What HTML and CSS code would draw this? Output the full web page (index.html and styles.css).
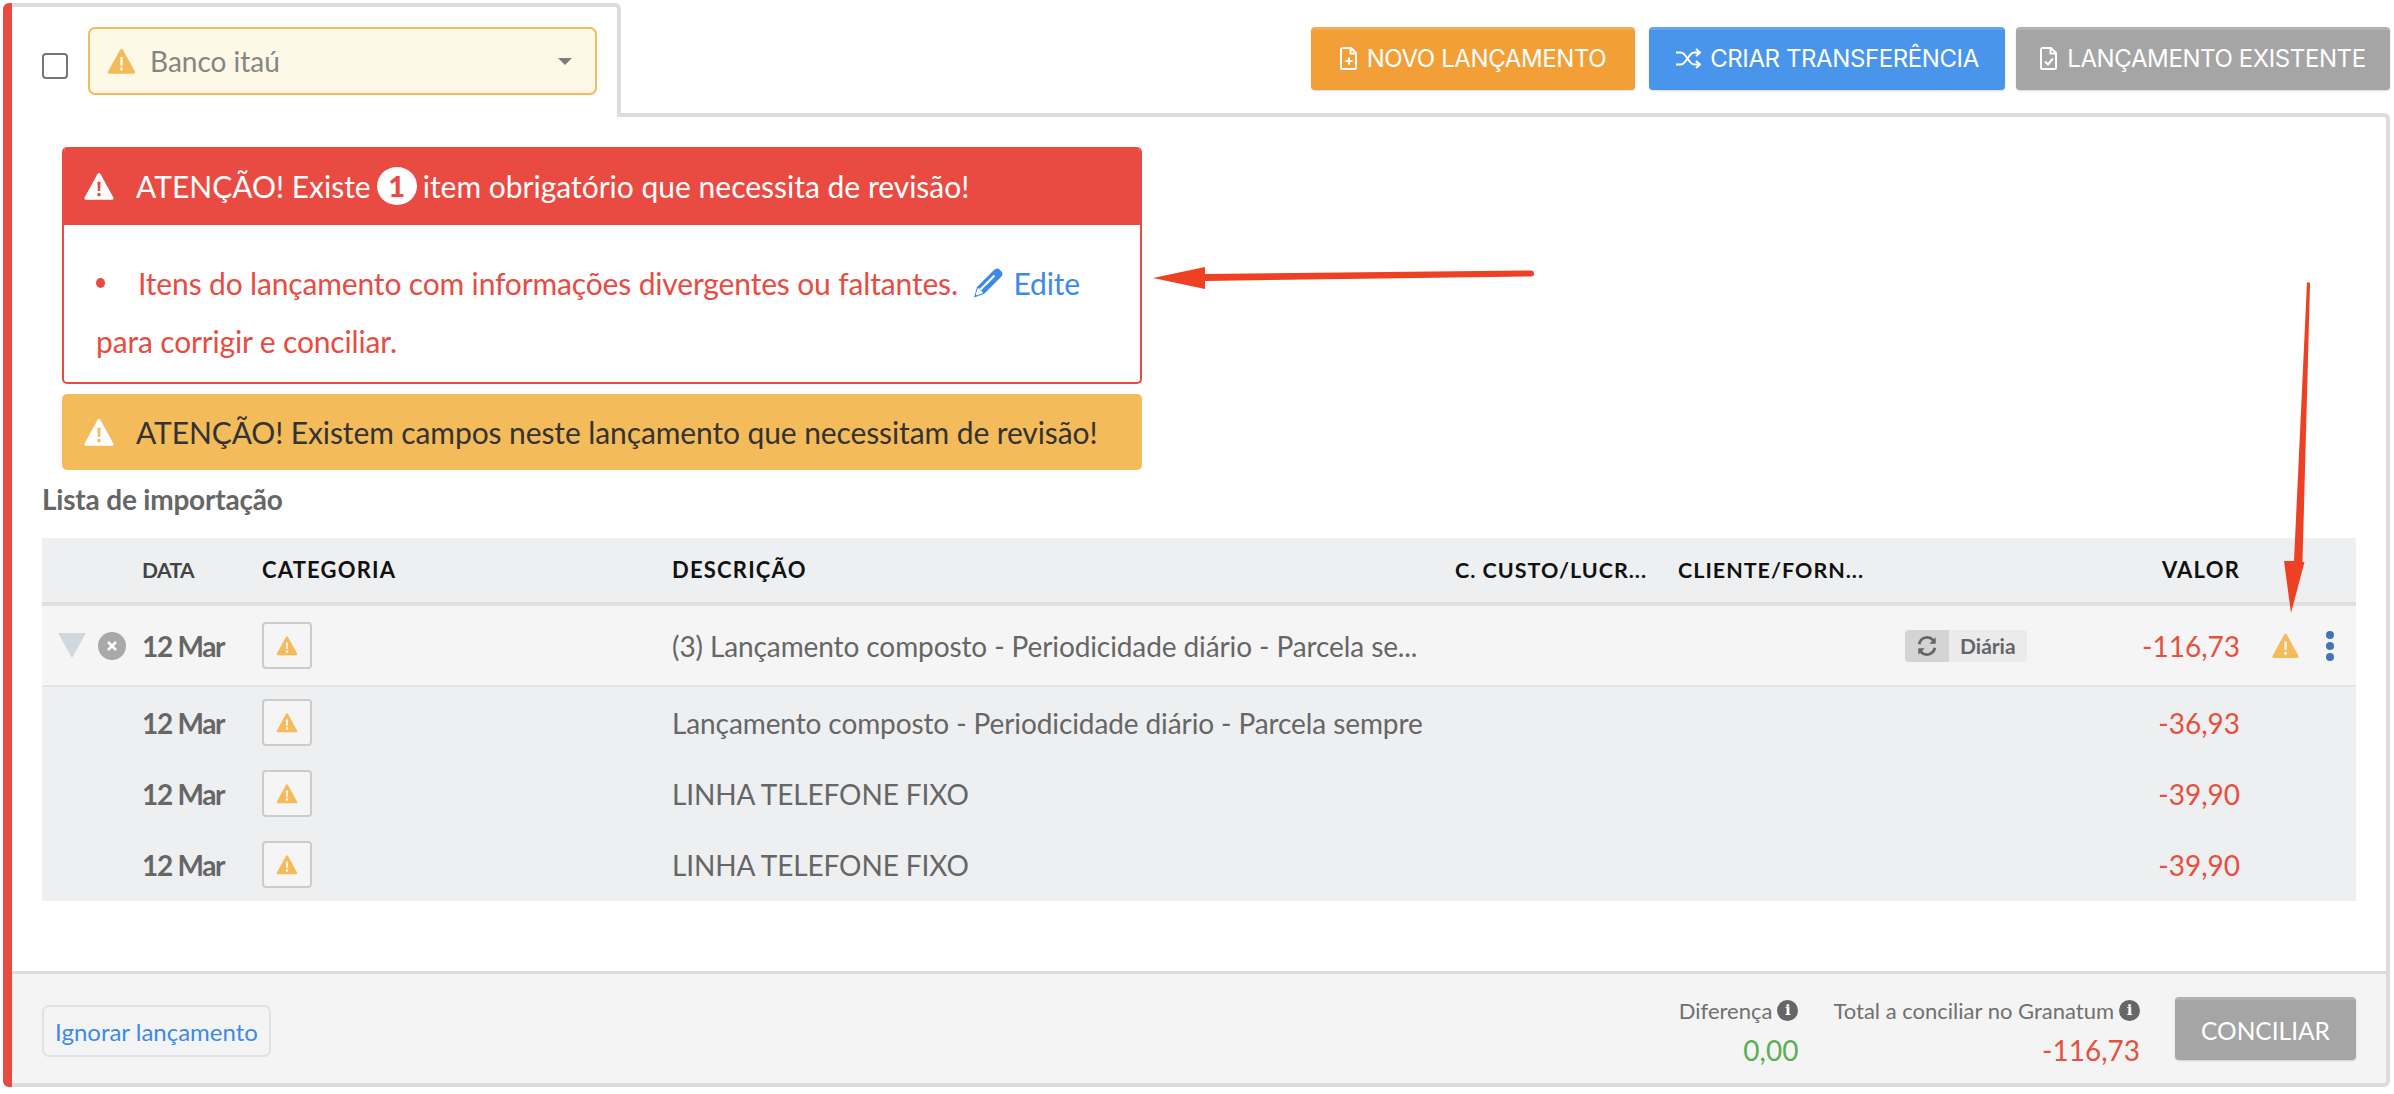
FILE: index.html
```html
<!DOCTYPE html>
<html lang="pt">
<head>
<meta charset="utf-8">
<title>Conciliação</title>
<link rel="stylesheet" href="styles.css">
</head>
<body>
<svg class="defs" width="0" height="0" aria-hidden="true">
  <symbol id="warn" viewBox="0 0 24 24"><path fill-rule="evenodd" d="M12 1.500c.5 0 .9.3 1.200.8l10.300 18.800c.5.9-.1 1.900-1.100 1.900H1.600c-1 0-1.600-1-1.100-1.900L10.800 2.300c.3-.5.7-.8 1.200-.8zM10.700 8.500l.4 7.500h1.800l.4-7.500zM10.800 17.500v2.700h2.400v-2.700z"/></symbol>
</svg>
<div class="card">
  <div class="top">
    <div class="tab">
      <span class="check"></span>
      <div class="select">
        <svg class="select-warn"><use href="#warn"/></svg>
        <span class="select-text">Banco itaú</span>
        <span class="caret"></span>
      </div>
    </div>
    <div class="actions">
      <button class="btn btn-orange">
        <svg class="btn-icon" viewBox="0 0 18 24"><path d="M2.500 1.500h8.500l5 5v14.500a1.500 1.500 0 0 1-1.500 1.500h-12a1.500 1.500 0 0 1-1.500-1.500v-18a1.500 1.500 0 0 1 1.500-1.500zM10.500 1.500v5.500h5.500M9 11v7M5.500 14.500h7"/></svg>
        NOVO LANÇAMENTO
      </button>
      <button class="btn btn-blue">
        <svg class="btn-icon btn-icon-wide" viewBox="0 0 26 24"><path d="M1 6h5c5 0 8 12 13 12h5M1 18h5c5 0 8-12 13-12h5M21 2.500l4 3.500-4 3.500M21 14.500l4 3.500-4 3.500"/></svg>
        CRIAR TRANSFERÊNCIA
      </button>
      <button class="btn btn-gray">
        <svg class="btn-icon" viewBox="0 0 18 24"><path d="M2.500 1.500h8.500l5 5v14.500a1.500 1.500 0 0 1-1.500 1.500h-12a1.500 1.500 0 0 1-1.500-1.500v-18a1.500 1.500 0 0 1 1.500-1.500zM10.500 1.500v5.500h5.500M5 15l3 3 5-6"/></svg>
        LANÇAMENTO EXISTENTE
      </button>
    </div>
  </div>

  <div class="content">
    <div class="alert-red">
      <div class="alert-red-head">
        <svg class="alert-icon"><use href="#warn"/></svg>
        <span>ATENÇÃO! Existe</span>
        <span class="count">1</span>
        <span>item obrigatório que necessita de revisão!</span>
      </div>
      <div class="alert-red-body">
        <span class="bullet"></span><span class="alert-item">Itens do lançamento com informações divergentes ou faltantes.</span>
        <a class="edit"><svg class="pencil" viewBox="0 0 30 30"><path class="pencil-body" d="M1 29.500L4 19 21 2c2-2 4.500-2 6 0l1 1c2 1.500 2 4 0 6L11 26z"/><path class="pencil-line" d="M7.500 21.500L21.500 7.500M3.800 26.200l1.600-5 3.400 3.400z"/></svg>Edite</a>
        <br>para corrigir e conciliar.
      </div>
    </div>
    <div class="alert-yellow">
      <svg class="alert-icon"><use href="#warn"/></svg>
      <span>ATENÇÃO! Existem campos neste lançamento que necessitam de revisão!</span>
    </div>
    <div class="list-title">Lista de importação</div>

    <div class="table">
      <div class="row row-head">
        <span class="cell-date-head">DATA</span>
        <span class="col-cat">CATEGORIA</span>
        <span class="col-desc">DESCRIÇÃO</span>
        <span class="col-cost">C. CUSTO/LUCR...</span>
        <span class="col-client">CLIENTE/FORN...</span>
        <span class="col-value">VALOR</span>
      </div>
      <div class="row row-main">
        <span class="col-tools">
          <span class="tri"></span>
          <svg class="xcircle" viewBox="0 0 28 28"><circle cx="14" cy="14" r="14"/><path d="M10 10l8 8M18 10l-8 8"/></svg>
        </span>
        <span class="col-date">12 Mar</span>
        <span class="col-cat"><span class="cat-box"><svg class="cat-warn"><use href="#warn"/></svg></span></span>
        <span class="col-desc-main">(3) Lançamento composto - Periodicidade diário - Parcela se...</span>
        <span class="col-tag"><span class="tag"><span class="tag-ico"><svg class="sync" viewBox="0 0 24 24"><path d="M3.500 10a8.700 8.700 0 0 1 15-4.500l2 2M20.500 14a8.700 8.700 0 0 1-15 4.500l-2-2"/><path class="sync-head" d="M21.500 2.500v7h-7zM2.500 21.500v-7h7z"/></svg></span><span class="tag-text">Diária</span></span></span>
        <span class="col-amount">-116,73</span>
        <span class="col-end">
          <svg class="row-warn"><use href="#warn"/></svg>
          <span class="dots"><i></i><i></i><i></i></span>
        </span>
      </div>
      <div class="row row-sub">
        <span class="col-date">12 Mar</span>
        <span class="col-cat"><span class="cat-box"><svg class="cat-warn"><use href="#warn"/></svg></span></span>
        <span class="col-desc-main">Lançamento composto - Periodicidade diário - Parcela sempre</span>
        <span class="col-amount">-36,93</span>
      </div>
      <div class="row row-sub">
        <span class="col-date">12 Mar</span>
        <span class="col-cat"><span class="cat-box"><svg class="cat-warn"><use href="#warn"/></svg></span></span>
        <span class="col-desc-main">LINHA TELEFONE FIXO</span>
        <span class="col-amount">-39,90</span>
      </div>
      <div class="row row-sub">
        <span class="col-date">12 Mar</span>
        <span class="col-cat"><span class="cat-box"><svg class="cat-warn"><use href="#warn"/></svg></span></span>
        <span class="col-desc-main">LINHA TELEFONE FIXO</span>
        <span class="col-amount">-39,90</span>
      </div>
    </div>
  </div>

  <div class="footer">
    <button class="ignore">Ignorar lançamento</button>
    <div class="totals">
      <div class="total">
        <div class="total-label">Diferença <span class="info">i</span></div>
        <div class="total-value green">0,00</div>
      </div>
      <div class="total">
        <div class="total-label">Total a conciliar no Granatum <span class="info">i</span></div>
        <div class="total-value red">-116,73</div>
      </div>
      <button class="conciliar">CONCILIAR</button>
    </div>
  </div>
</div>

<svg class="annot annot-h" viewBox="0 0 384 26" aria-hidden="true">
  <path d="M0 12L52 1V8L378 4.500a2.500 2.500 0 0 1 0 6L52 15V23z"/>
</svg>
<svg class="annot annot-v" viewBox="0 0 28 332" aria-hidden="true">
  <path d="M24 0.500a2 2 0 0 1 3 2L19.500 280H21.500L8 331 1 279h10z"/>
</svg>
</body>
</html>
```
FILE: styles.css
```css
* { box-sizing: border-box; }
html, body { margin: 0; padding: 0; }
body {
  width: 2394px;
  height: 1094px;
  overflow: hidden;
  background: #fff;
  font-family: Lato, "Liberation Sans", sans-serif;
  color: #666;
  position: relative;
  padding: 3px 4px 0 3px;
}
.defs { position: absolute; }
svg { display: block; }

.card {
  height: 1084px;
  border-left: 9px solid #e94b43;
  border-radius: 6px 0 0 6px;
  display: flex;
  flex-direction: column;
}

.top { display: flex; height: 114px; flex: none; }
.tab {
  position: relative;
  z-index: 1;
  background: #fff;
  width: 609px;
  border-top: 4px solid #dcdcdc;
  border-right: 4px solid #dcdcdc;
  border-top-right-radius: 6px;
  display: flex;
  align-items: flex-start;
  padding: 20px 0 0 30px;
}
.check {
  width: 26px;
  height: 26px;
  margin-top: 26px;
  margin-right: 20px;
  border: 2px solid #757575;
  border-radius: 4px;
  background: #fff;
}
.select {
  width: 509px;
  height: 68px;
  background: #fef8e6;
  border: 2px solid #f4bb5a;
  border-radius: 7px;
  display: flex;
  align-items: center;
  padding: 0 23px 0 17px;
}
.select-warn { width: 29px; height: 28px; fill: #f4bb5a; flex: none; }
.select-text { margin-left: 14px; font-size: 28px; color: #858585; flex: 1; }
.caret {
  width: 0; height: 0;
  border-left: 7px solid transparent;
  border-right: 7px solid transparent;
  border-top: 7px solid #7d7d7d;
}

.actions {
  flex: 1;
  display: flex;
  justify-content: flex-end;
  padding-top: 24px;
  height: 110px;
}
.btn {
  height: 63px;
  border: 0;
  border-top: 3px solid rgba(255,255,255,.14);
  border-radius: 4px;
  color: #fff;
  font-family: Inter, Lato, sans-serif;
  font-size: 24px;
  letter-spacing: -0.4px;
  display: flex;
  align-items: center;
  justify-content: center;
  gap: 9px;
  padding: 0 0 3px;
  box-shadow: 0 1px 2px rgba(0,0,0,.15);
}
.btn-icon { width: 18px; height: 25px; fill: none; stroke: #fff; stroke-width: 2; flex: none; }
.btn-icon-wide { width: 26px; }
.btn-orange { width: 324px; margin-right: 14px; background-color: #f39f37; }
.btn-blue { width: 356px; margin-right: 11px; background-color: #4a95ec; }
.btn-gray { width: 374px; background-color: #a5a5a5; }

.content {
  flex: 1;
  border-top: 4px solid #dcdcdc;
  border-right: 4px solid #dcdcdc;
  border-top-right-radius: 6px;
  margin-top: -4px;
  padding: 30px 30px 0 30px;
}

.alert-red {
  width: 1080px;
  margin-left: 20px;
  border-radius: 5px;
  overflow: hidden;
  border: 2px solid #e94b43;
  border-top: 0;
}
.alert-red-head {
  height: 78px;
  margin: 0 -2px;
  background: #e94b43;
  color: #fff;
  font-size: 30px;
  display: flex;
  align-items: center;
  padding-left: 21px;
}
.alert-icon { width: 32px; height: 30px; fill: #fff; margin-right: 21px; flex: none; }
.count {
  width: 40px; height: 38px;
  margin: 0 6px;
  border-radius: 50%;
  background: #fff;
  color: #e94b43;
  font-weight: 900;
  font-size: 29px;
  line-height: 38px;
  text-align: center;
}
.alert-red-body {
  height: 157px;
  color: #e94b43;
  font-size: 30px;
  letter-spacing: -0.15px;
  line-height: 58px;
  padding: 29px 0 0 32px;
}
.bullet {
  display: inline-block;
  width: 9px; height: 10px;
  border-radius: 50%;
  background: #e94b43;
  vertical-align: 7px;
  margin-right: 33px;
}
.edit { color: #3d8ae6; display: inline-flex; align-items: center; margin-left: 8px; vertical-align: top; height: 58px; }
.pencil { width: 30px; height: 30px; margin-right: 10px; }
.pencil-body { fill: #3d8ae6; }
.pencil-line { fill: #fff; stroke: #fff; stroke-width: 2; stroke-linejoin: round; }
.alert-yellow {
  width: 1080px;
  height: 76px;
  margin: 10px 0 0 20px;
  background: #f4bb5a;
  border-radius: 5px;
  color: #333;
  font-size: 30px;
  letter-spacing: -0.1px;
  display: flex;
  align-items: center;
  padding-left: 21px;
}
.list-title { height: 68px; line-height: 58px; font-size: 28px; font-weight: 700; color: #666; letter-spacing: -0.2px; }

.table { background: #eeeff1; padding-bottom: 1px; }
.row {
  display: grid;
  grid-template-columns: 100px 120px 410px 783px 223px 227px 130px 205px 116px;
  align-items: center;
}
.row-head { height: 68px; border-bottom: 4px solid #dfdfdf; color: #111; font-size: 22px; font-weight: 700; letter-spacing: 1.2px; padding-bottom: 1px; }
.cell-date-head { grid-column: 2; font-size: 21px; color: #444; letter-spacing: -0.6px; }
.row-head .col-cat { grid-column: 3; }
.col-desc { grid-column: 4; }
.col-cost { grid-column: 5; font-size: 21.5px; letter-spacing: 1px; }
.col-client { grid-column: 6 / 8; font-size: 21.5px; letter-spacing: 1px; }
.col-value { grid-column: 8; text-align: right; }
.row-main { height: 81px; background: #f5f5f6; border-bottom: 2px solid #e2e4e8; }
.row-sub { height: 71px; }
.col-tools { grid-column: 1; display: flex; align-items: center; padding-left: 16px; }
.tri {
  width: 0; height: 0;
  border-left: 14px solid transparent;
  border-right: 14px solid transparent;
  border-top: 25px solid #cfd8dc;
}
.xcircle { width: 28px; height: 28px; margin-left: 12px; fill: #a9a9a9; }
.xcircle path { stroke: #fff; stroke-width: 2.5; }
.col-date { grid-column: 2; font-size: 28px; font-weight: 700; color: #666; letter-spacing: -1.3px; }
.col-cat { grid-column: 3; }
.cat-box {
  display: flex;
  align-items: center;
  justify-content: center;
  width: 50px;
  height: 47px;
  border: 2px solid #ccc;
  border-radius: 4px;
  background: #f5f5f6;
}
.cat-warn { width: 22px; height: 21px; fill: #f4bb5a; }
.col-desc-main { grid-column: 4 / 7; font-size: 28px; letter-spacing: -0.1px; color: #666; white-space: nowrap; }
.col-tag { grid-column: 7; }
.tag { display: flex; width: 122px; height: 32px; border-radius: 4px; background: #ebebeb; overflow: hidden; align-items: center; }
.tag-ico { width: 44px; height: 32px; background: #d4d4d4; display: flex; align-items: center; justify-content: center; }
.sync { width: 22px; height: 22px; fill: none; stroke: #666; stroke-width: 3; }
.sync-head { fill: #666; stroke: none; }
.tag-text { margin-left: 11px; font-size: 21px; font-weight: 700; color: #666; }
.col-amount { grid-column: 8; text-align: right; font-size: 28px; color: #e5503f; }
.col-end { grid-column: 9; display: flex; align-items: center; padding-left: 31px; }
.row-warn { width: 29px; height: 27px; fill: #f4bb5a; }
.dots { display: flex; flex-direction: column; gap: 3px; margin-left: 26px; }
.dots i { display: block; width: 8px; height: 8px; border-radius: 50%; background: #4274b8; }

.footer {
  height: 116px;
  flex: none;
  background: #f4f4f4;
  border-top: 3px solid #dcdcdc;
  border-bottom: 4px solid #dcdcdc;
  border-right: 4px solid #dcdcdc;
  border-bottom-right-radius: 6px;
  display: flex;
  align-items: flex-start;
  justify-content: space-between;
  padding: 31px 30px 0 30px;
}
.ignore {
  width: 229px;
  height: 52px;
  border: 2px solid #dfe3e9;
  border-radius: 7px;
  background: #f4f4f4;
  color: #3d8ae6;
  font-family: Lato, sans-serif;
  font-size: 24px;
  padding: 0;
}
.totals { display: flex; align-items: flex-start; margin-top: -8px; }
.total { text-align: right; margin-right: 35px; }
.total-label { font-size: 22px; color: #707070; display: flex; align-items: center; justify-content: flex-end; gap: 5px; height: 26px; }
.info {
  width: 21px; height: 21px;
  border-radius: 50%;
  background: #666;
  color: #fff;
  font-size: 15px;
  font-weight: 700;
  line-height: 21px;
  text-align: center;
  font-family: "DejaVu Serif", serif;
}
.total-value { font-size: 28px; margin-top: 10px; line-height: 34px; }
.green { color: #5cae55; }
.red { color: #e5503f; }
.conciliar {
  width: 181px;
  height: 63px;
  border: 0;
  border-top: 3px solid rgba(255,255,255,.14);
  border-radius: 4px;
  background: #a5a5a5;
  color: #fff;
  font-family: Lato, sans-serif;
  font-size: 24.5px;
  padding: 0;
  box-shadow: 0 1px 2px rgba(0,0,0,.15);
}

.annot { position: absolute; fill: #ee4023; overflow: visible; }
.annot-h { left: 1153px; top: 266px; width: 384px; height: 26px; }
.annot-v { left: 2283px; top: 282px; width: 28px; height: 332px; }
```
